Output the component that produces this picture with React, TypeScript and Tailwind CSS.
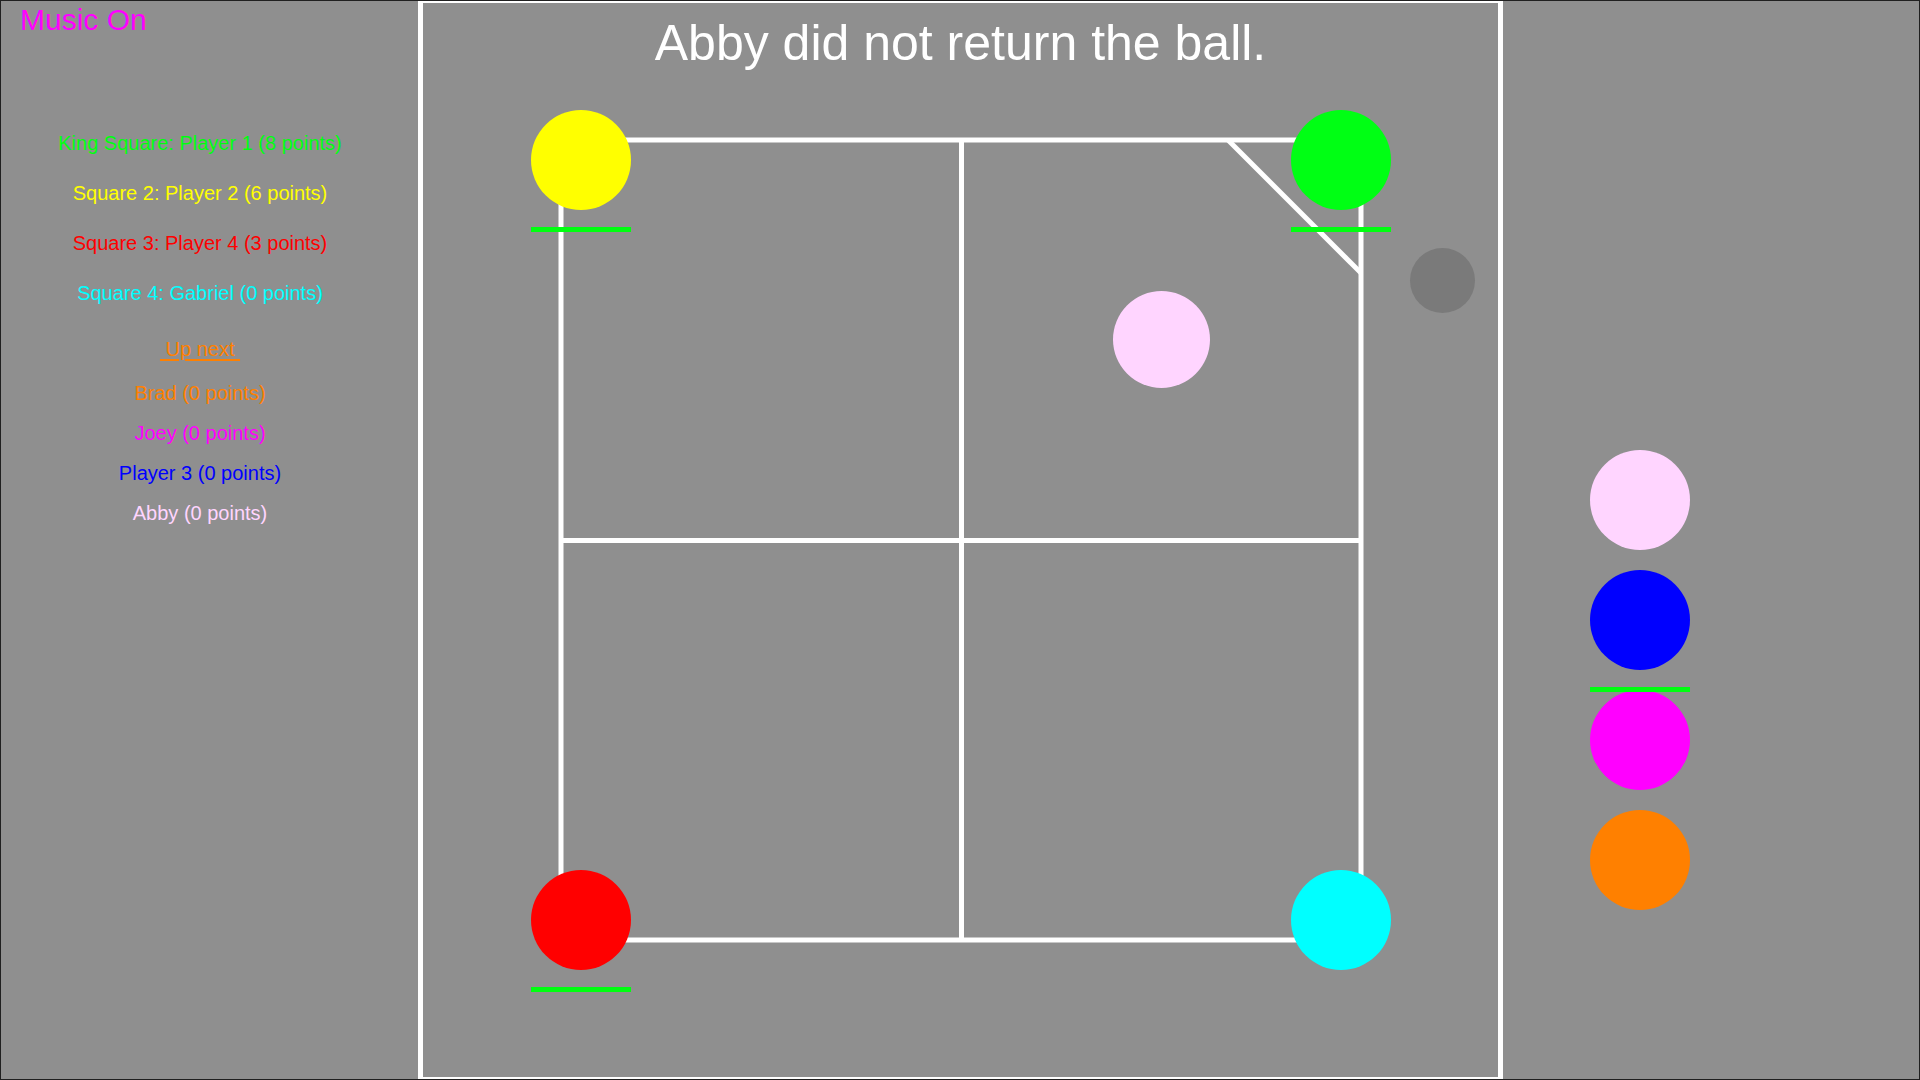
import React from "react";

type Line = { text: string; color: string };

const squares: Line[] = [
  { text: "King Square: Player 1 (8 points)", color: "text-[#00ff10]" },
  { text: "Square 2: Player 2 (6 points)", color: "text-[#ffff00]" },
  { text: "Square 3: Player 4 (3 points)", color: "text-[#ff0000]" },
  { text: "Square 4: Gabriel (0 points)", color: "text-[#00ffff]" },
];

const queue: Line[] = [
  { text: "Brad (0 points)", color: "text-[#ff8000]" },
  { text: "Joey (0 points)", color: "text-[#ff00ff]" },
  { text: "Player 3 (0 points)", color: "text-[#0000ff]" },
  { text: "Abby (0 points)", color: "text-[#ffd5ff]" },
];

function Underline() {
  return <div className="absolute left-0 top-[117px] z-10 h-[5px] w-[100px] bg-[#00ff10]" />;
}

export default function App() {
  return (
    <div className="flex h-[1080px] w-[1920px] overflow-hidden border border-[#202020] bg-[#8f8f8f] font-['Liberation_Sans',Arial,sans-serif]">
      {/* Left column */}
      <div className="flex w-[417px] shrink-0 flex-col pr-[19px]">
        <div className="pl-[19px] pt-[1px] text-[30px] leading-[36px] text-[#ff00ff]">Music On</div>
        <div className="mt-[80px] flex flex-col items-center text-[20px] leading-[50px]">
          {squares.map((s) => (
            <div key={s.text} className={s.color}>
              {s.text}
            </div>
          ))}
        </div>
        <div className="mt-[11px] flex flex-col items-center text-[20px] leading-[40px]">
          <div className="whitespace-pre text-[#ff8000] underline decoration-[2px] underline-offset-[3px]">
            {"\u00a0Up next\u00a0"}
          </div>
        </div>
        <div className="mt-[4px] flex flex-col items-center text-[20px] leading-[40px]">
          {queue.map((q) => (
            <div key={q.text} className={q.color}>
              {q.text}
            </div>
          ))}
        </div>
      </div>

      {/* Center court panel */}
      <div className="flex w-[1085px] shrink-0 flex-col items-center border-x-[5px] border-y-[2px] border-white">
        <div className="pt-[15px] text-[50px] leading-[50px] text-white">Abby did not return the ball.</div>
        <div className="relative mt-[72px] h-[800px] w-[800px]">
          <svg width="800" height="800" viewBox="0 0 800 800" className="block overflow-visible">
            <rect x="0" y="0" width="800" height="800" fill="none" stroke="#ffffff" strokeWidth="5" />
            <line x1="400.5" y1="0" x2="400.5" y2="800" stroke="#ffffff" strokeWidth="5" />
            <line x1="0" y1="400.5" x2="800" y2="400.5" stroke="#ffffff" strokeWidth="5" />
            <line x1="667" y1="0" x2="800" y2="133" stroke="#ffffff" strokeWidth="5" />
          </svg>
          {/* Players in squares */}
          <div className="absolute left-[-30px] top-[-30px] h-[100px] w-[100px]">
            <div className="h-[100px] w-[100px] rounded-full bg-[#ffff00]" />
            <Underline />
          </div>
          <div className="absolute left-[730px] top-[-30px] h-[100px] w-[100px]">
            <div className="h-[100px] w-[100px] rounded-full bg-[#00ff14]" />
            <Underline />
          </div>
          <div className="absolute left-[-30px] top-[730px] h-[100px] w-[100px]">
            <div className="h-[100px] w-[100px] rounded-full bg-[#ff0000]" />
            <Underline />
          </div>
          <div className="absolute left-[730px] top-[730px] h-[100px] w-[100px]">
            <div className="h-[100px] w-[100px] rounded-full bg-[#00ffff]" />
          </div>
          {/* Ball and player shadow */}
          <div className="absolute left-[552px] top-[151px] h-[97px] w-[97px] rounded-full bg-[#ffd5ff]" />
          <div className="absolute left-[849px] top-[108px] h-[65px] w-[65px] rounded-full bg-[#7a7a7a]" />
        </div>
      </div>

      {/* Right column: waiting queue */}
      <div className="flex flex-1 flex-col gap-[20px] pl-[87px] pt-[449px]">
        <div className="h-[100px] w-[100px] rounded-full bg-[#ffd5ff]" />
        <div className="relative h-[100px] w-[100px]">
          <div className="h-[100px] w-[100px] rounded-full bg-[#0000ff]" />
          <Underline />
        </div>
        <div className="h-[100px] w-[100px] rounded-full bg-[#ff00ff]" />
        <div className="h-[100px] w-[100px] rounded-full bg-[#ff8000]" />
      </div>
    </div>
  );
}
